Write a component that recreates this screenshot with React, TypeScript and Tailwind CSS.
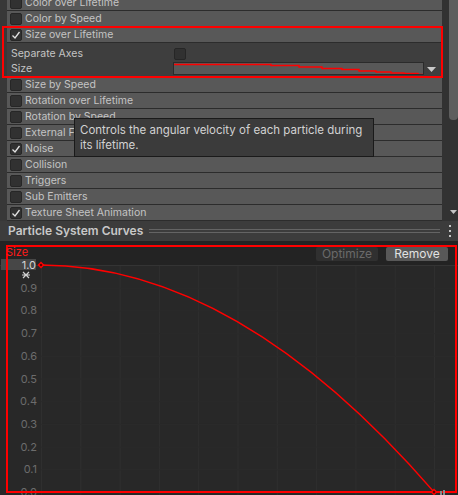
import React from "react";

const modulesTop = [
  { label: "Color over Lifetime" },
  { label: "Color by Speed" },
];

const modulesBottom = [
  { label: "Size by Speed" },
  { label: "Rotation over Lifetime" },
  { label: "Rotation by Speed" },
  { label: "External Forces" },
  { label: "Noise", checked: true },
  { label: "Collision" },
  { label: "Triggers" },
  { label: "Sub Emitters" },
  { label: "Texture Sheet Animation", checked: true },
];

function CheckBox({ checked }: { checked?: boolean }) {
  return (
    <div className="flex h-[12px] w-[12px] shrink-0 items-center justify-center rounded-[2px] border border-[#262626] bg-[#313131]">
      {checked && (
        <svg width="10" height="10" viewBox="0 0 10 10">
          <path d="M1.5 5.5 L4 8 L8.5 2" fill="none" stroke="#e2e2e2" strokeWidth="1.3" />
        </svg>
      )}
    </div>
  );
}

function ModuleRow({ label, checked }: { label: string; checked?: boolean }) {
  return (
    <div className="flex h-[16px] shrink-0 items-center gap-[3px] border-b border-[#2c2c2c] bg-[#585858] pl-[3px]">
      <CheckBox checked={checked} />
      <span className="mt-px whitespace-nowrap text-[10.5px] leading-none text-[#c4c4c4]">{label}</span>
    </div>
  );
}

// tiny preview of the size curve inside the field
function CurvePreview() {
  const pts = "0,1.5 97,1.5 97,2.5 125,2.5 125,4 148,4 148,5.5 168,5.5 168,6.5 185,6.5 185,8 202,8 202,9 217,9 217,10 230,10 230,10.5 244,10.5 244,11.5 250,11.5";
  return (
    <svg width="249" height="11" viewBox="0 0 249 11" className="block">
      <polyline points={pts} fill="none" stroke="#ff0000" strokeWidth="1.4" />
    </svg>
  );
}

function SizeOverLifetime() {
  return (
    <div className="relative shrink-0">
      <ModuleRow label="Size over Lifetime" checked />
      <div className="h-[34px] bg-[#3e3e3e] pl-[4px] pt-[3px]">
        <div className="flex h-[15px] items-center">
          <span className="mt-px w-[163px] text-[10.5px] leading-none text-[#c4c4c4]">Separate Axes</span>
          <CheckBox />
        </div>
        <div className="flex h-[15px] items-center">
          <span className="mt-px w-[162px] text-[10.5px] leading-none text-[#c4c4c4]">Size</span>
          <div className="h-[13px] w-[251px] border border-[#2b2b2b] bg-[#585858]">
            <CurvePreview />
          </div>
          <svg width="9" height="5" viewBox="0 0 9 5" className="ml-[3px] mt-[1px]">
            <path d="M0 0 H9 L4.5 5 Z" fill="#c8c8c8" />
          </svg>
        </div>
      </div>
      <div className="pointer-events-none absolute -bottom-[1px] -left-[5px] -right-[1px] -top-[1px] border-2 border-[#ff0000]" />
    </div>
  );
}

function Tooltip() {
  return (
    <div className="absolute left-[74px] top-[118px] h-[39px] w-[300px] whitespace-nowrap border border-[#1a1a1a] bg-[#3b3b3b] pl-[5px] pt-[4px] text-[11.5px] leading-[15px] text-[#d2d2d2]">
      Controls the angular velocity of each particle during
      <br />
      its lifetime.
    </div>
  );
}

function Scrollbar() {
  return (
    <div className="flex w-[16px] shrink-0 flex-col bg-[#323232]">
      <div className="ml-auto h-[120px] w-[9px] rounded-b-[4px] bg-[#5e5e5e]" />
      <div className="flex-1" />
      <div className="mb-[7px] flex justify-end pr-[1px]">
        <svg width="7" height="4" viewBox="0 0 7 4">
          <path d="M0 0 H7 L3.5 4 Z" fill="#c4c4c4" />
        </svg>
      </div>
    </div>
  );
}

function CurvesHeader() {
  return (
    <div className="flex h-[20px] items-start bg-[#3c3c3c]">
      <span className="shrink-0 whitespace-nowrap pl-[8px] pt-[2px] text-[12px] font-semibold leading-[15px] text-[#c8c8c8]">
        Particle System Curves
      </span>
      <div className="ml-[6px] mt-[8px] flex h-[4px] flex-1 flex-col justify-between">
        <div className="h-px bg-[#646464]" />
        <div className="h-px bg-[#646464]" />
      </div>
      <div className="ml-[9px] mr-[7px] mt-[4px] flex flex-col gap-[3px]">
        <div className="h-[2px] w-[2px] bg-[#c4c4c4]" />
        <div className="h-[2px] w-[2px] bg-[#c4c4c4]" />
        <div className="h-[2px] w-[2px] bg-[#c4c4c4]" />
      </div>
    </div>
  );
}

function CurveChart() {
  const x0 = 41;
  const x1 = 434;
  const yTop = 24;
  const yBot = 251;
  const step = (x1 - x0) / 10;
  const vstep = (yBot - yTop) / 10;
  const labels = ["0.9", "0.8", "0.7", "0.6", "0.5", "0.4", "0.3", "0.2", "0.1", "0.0"];
  const diamond = (cx: number, cy: number) => (
    <g>
      <polygon points={`${cx - 3.5},${cy} ${cx},${cy - 3.5} ${cx + 3.5},${cy} ${cx},${cy + 3.5}`} fill="#ff0000" />
      <polygon points={`${cx - 1.5},${cy} ${cx},${cy - 1.5} ${cx + 1.5},${cy} ${cx},${cy + 1.5}`} fill="#4a0000" />
    </g>
  );
  return (
    <svg width="458" height="254" viewBox="0 0 458 254" className="absolute inset-0" fontFamily="Inter, sans-serif">
      <rect x="0" y="0" width="458" height="254" fill="#282828" />
      <rect x="0" y="0" width="458" height="24" fill="#232323" />
      {Array.from({ length: 11 }, (_, k) => (
        <line key={`v${k}`} x1={x0 + k * step + 0.5} y1={yTop} x2={x0 + k * step + 0.5} y2={254} stroke="#2f2f2f" />
      ))}
      {Array.from({ length: 10 }, (_, k) => (
        <line key={`h${k}`} x1={x0} y1={yTop + (k + 1) * vstep + 0.5} x2={458} y2={yTop + (k + 1) * vstep + 0.5} stroke="#2b2b2b" />
      ))}
      <line x1="0" y1={yTop + 0.5} x2="458" y2={yTop + 0.5} stroke="#343434" />
      <rect x="1" y="18" width="35" height="11" fill="#474747" />
      <text x="36" y="28" textAnchor="end" fontSize="11" fill="#d6d6d6">1.0</text>
      {labels.map((l, i) => (
        <text key={l} x="37" y={yTop + (i + 1) * vstep + 4} textAnchor="end" fontSize="11" fill="#6c6c6c">
          {l}
        </text>
      ))}
      <path d="M23 31 L29 37 M29 31 L23 37 M22 34 H30" stroke="#d0d0d0" strokeWidth="1.2" fill="none" />
      <path d={`M${x0} ${yTop} Q${(x0 + x1) / 2} ${yTop} ${x1} ${yBot}`} fill="none" stroke="#ff0000" strokeWidth="1.3" />
      <rect x="7" y="5" width="449" height="246" fill="none" stroke="#ff0000" strokeWidth="2" />
      <text x="6" y="15" fontSize="11" fill="#ff1a1a">Size</text>
      {diamond(x0, yTop)}
      {diamond(x1, yBot)}
      <rect x="440" y="250" width="2" height="4" fill="#8a8a8a" />
      <rect x="443" y="249" width="2" height="5" fill="#8a8a8a" />
    </svg>
  );
}

export default function App() {
  return (
    <div className="h-[495px] w-[458px] overflow-hidden bg-[#383838] font-['Inter',sans-serif]">
      <div className="relative flex h-[221px] overflow-hidden">
        <div className="w-[7px] shrink-0" />
        <div className="mt-[-5px] flex flex-1 flex-col">
          {modulesTop.map((m) => (
            <ModuleRow key={m.label} label={m.label} />
          ))}
          <SizeOverLifetime />
          {modulesBottom.map((m) => (
            <ModuleRow key={m.label} label={m.label} checked={m.checked} />
          ))}
        </div>
        <Scrollbar />
        <Tooltip />
      </div>
      <CurvesHeader />
      <div className="relative h-[254px]">
        <CurveChart />
        <div className="absolute right-[10px] top-[6px] flex gap-[8px]">
          <div className="flex h-[14px] w-[62px] items-center justify-center rounded-[2px] bg-[#303030] text-[12px] text-[#6a6a6a]">
            Optimize
          </div>
          <div className="flex h-[14px] w-[62px] items-center justify-center rounded-[2px] bg-[#585858] text-[12px] text-[#e2e2e2]">
            Remove
          </div>
        </div>
      </div>
    </div>
  );
}
